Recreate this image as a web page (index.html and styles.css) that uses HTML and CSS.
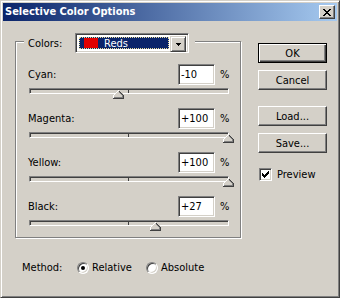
FILE: index.html
```html
<!DOCTYPE html>
<html>
<head>
<meta charset="utf-8">
<link rel="stylesheet" href="styles.css">
</head>
<body>
<div class="window">
  <div class="titlebar">
    <span class="title">Selective Color Options</span>
    <div class="close">
      <svg width="8" height="7" viewBox="0 0 8 7" shape-rendering="crispEdges"><path fill="#000" d="M0 0h2v1H0zM6 0h2v1H6zM1 1h2v1H1zM5 1h2v1H5zM2 2h4v1H2zM3 3h2v1H3zM2 4h4v1H2zM1 5h2v1H1zM5 5h2v1H5zM0 6h2v1H0zM6 6h2v1H6z"/></svg>
    </div>
  </div>
  <div class="body">
    <div class="main">
      <div class="group">
        <div class="legend">
          <span class="legend-label">Colors:</span>
          <div class="combo">
            <div class="combo-field">
              <div class="combo-value"><span class="swatch"></span><span class="combo-text">Reds</span></div>
            </div>
            <div class="combo-btn">
              <svg width="5" height="3" viewBox="0 0 5 3" shape-rendering="crispEdges"><path fill="#000" d="M0 0h5v1H0zM1 1h3v1H1zM2 2h1v1H2z"/></svg>
            </div>
          </div>
        </div>
        <div class="rows">
          <div class="row">
            <div class="row-top"><span class="row-label">Cyan:</span><div class="field">-10</div><span class="pct">%</span></div>
            <div class="track"><div class="thumb" style="left:84px"><svg width="11" height="9" viewBox="0 0 11 9" shape-rendering="crispEdges"><path fill="#D4D0C8" d="M0 5L5 0h1l5 5v4H0z"/><path fill="#fff" d="M0 5h1v3H0zM1 4h1v1H1zM2 3h1v1H2zM3 2h1v1H3zM4 1h1v1H4zM5 0h1v1H5z"/><path fill="#808080" d="M9 5h1v3H9zM1 7h9v1H1zM8 4h1v1H8zM7 3h1v1H7zM6 2h1v1H6z"/><path fill="#404040" d="M10 5h1v4h-1zM0 8h11v1H0zM9 4h1v1H9zM8 3h1v1H8zM7 2h1v1H7zM6 1h1v1H6z"/></svg></div></div>
          </div>
          <div class="row">
            <div class="row-top"><span class="row-label">Magenta:</span><div class="field">+100</div><span class="pct">%</span></div>
            <div class="track"><div class="thumb" style="left:194px"><svg width="11" height="9" viewBox="0 0 11 9" shape-rendering="crispEdges"><path fill="#D4D0C8" d="M0 5L5 0h1l5 5v4H0z"/><path fill="#fff" d="M0 5h1v3H0zM1 4h1v1H1zM2 3h1v1H2zM3 2h1v1H3zM4 1h1v1H4zM5 0h1v1H5z"/><path fill="#808080" d="M9 5h1v3H9zM1 7h9v1H1zM8 4h1v1H8zM7 3h1v1H7zM6 2h1v1H6z"/><path fill="#404040" d="M10 5h1v4h-1zM0 8h11v1H0zM9 4h1v1H9zM8 3h1v1H8zM7 2h1v1H7zM6 1h1v1H6z"/></svg></div></div>
          </div>
          <div class="row">
            <div class="row-top"><span class="row-label">Yellow:</span><div class="field">+100</div><span class="pct">%</span></div>
            <div class="track"><div class="thumb" style="left:194px"><svg width="11" height="9" viewBox="0 0 11 9" shape-rendering="crispEdges"><path fill="#D4D0C8" d="M0 5L5 0h1l5 5v4H0z"/><path fill="#fff" d="M0 5h1v3H0zM1 4h1v1H1zM2 3h1v1H2zM3 2h1v1H3zM4 1h1v1H4zM5 0h1v1H5z"/><path fill="#808080" d="M9 5h1v3H9zM1 7h9v1H1zM8 4h1v1H8zM7 3h1v1H7zM6 2h1v1H6z"/><path fill="#404040" d="M10 5h1v4h-1zM0 8h11v1H0zM9 4h1v1H9zM8 3h1v1H8zM7 2h1v1H7zM6 1h1v1H6z"/></svg></div></div>
          </div>
          <div class="row">
            <div class="row-top"><span class="row-label">Black:</span><div class="field">+27</div><span class="pct">%</span></div>
            <div class="track"><div class="thumb" style="left:121px"><svg width="11" height="9" viewBox="0 0 11 9" shape-rendering="crispEdges"><path fill="#D4D0C8" d="M0 5L5 0h1l5 5v4H0z"/><path fill="#fff" d="M0 5h1v3H0zM1 4h1v1H1zM2 3h1v1H2zM3 2h1v1H3zM4 1h1v1H4zM5 0h1v1H5z"/><path fill="#808080" d="M9 5h1v3H9zM1 7h9v1H1zM8 4h1v1H8zM7 3h1v1H7zM6 2h1v1H6z"/><path fill="#404040" d="M10 5h1v4h-1zM0 8h11v1H0zM9 4h1v1H9zM8 3h1v1H8zM7 2h1v1H7zM6 1h1v1H6z"/></svg></div></div>
          </div>
        </div>
      </div>
      <div class="side">
        <div class="btn btn-default">OK</div>
        <div class="btn btn-cancel">Cancel</div>
        <div class="btn btn-load">Load...</div>
        <div class="btn btn-save">Save...</div>
        <div class="check-row">
          <div class="checkbox"><svg width="7" height="7" viewBox="0 0 7 7" shape-rendering="crispEdges"><path fill="#000" d="M6 0h1v1H6zM5 1h2v1H5zM0 2h1v1H0zM4 2h3v1H4zM0 3h2v1H0zM3 3h3v1H3zM0 4h5v1H0zM1 5h3v1H1zM2 6h1v1H2z"/></svg></div>
          <span>Preview</span>
        </div>
      </div>
    </div>
    <div class="method">
      <span class="method-label">Method:</span>
      <div class="radio-item radio-rel"><span class="radio checked"></span><span>Relative</span></div>
      <div class="radio-item"><span class="radio"></span><span>Absolute</span></div>
    </div>
  </div>
</div>
</body>
</html>
```

FILE: styles.css
```css
html, body {
  margin: 0;
  padding: 0;
}
body {
  width: 340px;
  height: 298px;
  font-family: "DejaVu Sans Condensed", "Liberation Sans", sans-serif;
  font-size: 11px;
  color: #000;
  background: #D4D0C8;
}
.window {
  width: 340px;
  height: 298px;
  box-sizing: border-box;
  background: #D4D0C8;
  border: 1px solid;
  border-color: #D4D0C8 #404040 #404040 #D4D0C8;
  box-shadow: inset 1px 1px #fff, inset -1px -1px #808080;
  padding: 2px;
  display: flex;
  flex-direction: column;
}
.titlebar {
  height: 18px;
  flex: none;
  background: linear-gradient(to right, #0A246A, #A6CAF0);
  display: flex;
  align-items: center;
  justify-content: space-between;
  padding: 0 2px;
}
.title {
  color: #fff;
  font-weight: bold;
  line-height: 18px;
}
.close {
  width: 16px;
  height: 14px;
  box-sizing: border-box;
  background: #D4D0C8;
  border: 1px solid;
  border-color: #fff #404040 #404040 #fff;
  box-shadow: inset -1px -1px #808080;
  display: flex;
  align-items: center;
  justify-content: center;
}
.close svg { display: block; }
.body {
  flex: 1;
  padding-left: 12px;
  display: flex;
  flex-direction: column;
}
.main {
  display: flex;
  margin-top: 20px;
}
.group {
  width: 226px;
  height: 197px;
  box-sizing: border-box;
  border: 1px solid #808080;
  box-shadow: inset 1px 1px #fff, 1px 1px #fff;
  display: flex;
  flex-direction: column;
  align-items: flex-start;
}
.legend {
  margin-top: -9px;
  margin-left: 8px;
  padding: 0 6px 0 4px;
  background: #D4D0C8;
  display: flex;
  align-items: center;
  height: 20px;
}
.legend-label {
  width: 47px;
}
.combo {
  width: 114px;
  height: 20px;
  box-sizing: border-box;
  border: 1px solid;
  border-color: #808080 #fff #fff #808080;
  box-shadow: inset 1px 1px #404040, inset -1px -1px #D4D0C8;
  background: #fff;
  padding: 2px;
  display: flex;
}
.combo-field {
  flex: 1;
  padding: 1px;
  display: flex;
}
.combo-value {
  flex: 1;
  background: #0A246A;
  outline: 1px dotted #E8DC9C;
  outline-offset: -1px;
  display: flex;
  align-items: center;
  padding-left: 5px;
  color: #fff;
}
.swatch {
  width: 14px;
  height: 10px;
  background: #E00000;
  margin-right: 6px;
}
.combo-btn {
  width: 16px;
  height: 16px;
  box-sizing: border-box;
  background: #D4D0C8;
  border: 1px solid;
  border-color: #D4D0C8 #404040 #404040 #D4D0C8;
  box-shadow: inset 1px 1px #fff, inset -1px -1px #808080;
  display: flex;
  align-items: center;
  justify-content: center;
}
.combo-btn svg { display: block; }
.rows {
  margin-top: 11px;
  display: flex;
  flex-direction: column;
  gap: 14px;
  width: 100%;
}
.row {
  display: flex;
  flex-direction: column;
}
.row-top {
  display: grid;
  grid-template-columns: 145px 37px auto;
  column-gap: 5px;
  align-items: center;
  height: 21px;
  padding-left: 12px;
}
.field {
  height: 21px;
  box-sizing: border-box;
  border: 1px solid;
  border-color: #808080 #fff #fff #808080;
  box-shadow: inset 1px 1px #404040, inset -1px -1px #D4D0C8;
  background: #fff;
  padding-left: 2px;
  line-height: 19px;
}
.track {
  position: relative;
  margin-top: 3px;
  margin-left: 13px;
  width: 200px;
  height: 6px;
  box-sizing: border-box;
  border: 1px solid;
  border-color: #808080 #fff #fff #808080;
  box-shadow: inset 1px 1px #404040, inset -1px -1px #D4D0C8;
  background: #D4D0C8;
}
.track::after {
  content: "";
  position: absolute;
  left: 98px;
  top: 0;
  width: 1px;
  height: 4px;
  background: #404040;
}
.thumb {
  position: absolute;
  top: 1px;
  margin-left: -1px;
  width: 11px;
  height: 9px;
  z-index: 1;
}
.thumb svg { display: block; }
.side {
  margin-left: 17px;
  padding-top: 2px;
  display: flex;
  flex-direction: column;
}
.btn {
  width: 69px;
  height: 20px;
  box-sizing: border-box;
  border: 1px solid;
  border-color: #fff #404040 #404040 #fff;
  box-shadow: inset -1px -1px #808080;
  display: flex;
  align-items: center;
  justify-content: center;
}
.btn-default {
  border: 1px solid #000;
  box-shadow: inset 1px 1px #fff, inset -1px -1px #404040, inset -2px -2px #808080;
}
.btn-cancel { margin-top: 7px; }
.btn-load { margin-top: 16px; }
.btn-save { margin-top: 7px; }
.check-row {
  margin-top: 15px;
  margin-left: 1px;
  display: flex;
  align-items: center;
  gap: 5px;
}
.checkbox {
  width: 13px;
  height: 13px;
  box-sizing: border-box;
  border: 1px solid;
  border-color: #808080 #fff #fff #808080;
  box-shadow: inset 1px 1px #404040, inset -1px -1px #D4D0C8;
  background: #fff;
  display: flex;
  align-items: center;
  justify-content: center;
}
.checkbox svg { display: block; }
.method {
  margin-top: 23px;
  padding-left: 7px;
  display: flex;
  align-items: center;
  height: 13px;
}
.method-label {
  width: 55px;
}
.radio-item {
  display: flex;
  align-items: center;
  gap: 3px;
}
.radio-rel {
  width: 69px;
}
.radio {
  width: 12px;
  height: 12px;
  box-sizing: border-box;
  border-radius: 50%;
  border: 1px solid;
  border-color: #808080 #fff #fff #808080;
  box-shadow: inset 1px 1px #404040, inset -1px -1px #D4D0C8;
  background: #fff;
  display: flex;
  align-items: center;
  justify-content: center;
}
.radio.checked::after {
  content: "";
  width: 4px;
  height: 4px;
  border-radius: 50%;
  background: #000;
}
```
